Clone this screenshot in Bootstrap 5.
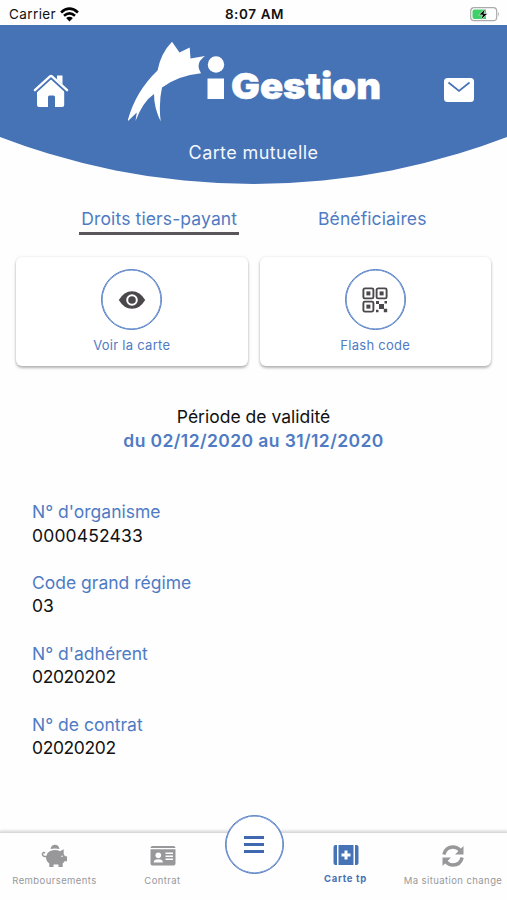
<!DOCTYPE html>
<html lang="fr">
<head>
<meta charset="utf-8">
<meta name="viewport" content="width=device-width, initial-scale=1">
<title>Carte mutuelle</title>
<link href="https://cdn.jsdelivr.net/npm/bootstrap@5.3.0/dist/css/bootstrap.min.css" rel="stylesheet">
<style>
  :root { --brand: #4672b6; --link: #4f7bc4; }
  body { font-family: Inter, "Liberation Sans", sans-serif; color: #111; background: #fefefe; }
  svg { display: block; }
  .screen { height: 900px; overflow: hidden; }
  .status { height: 25px; font-size: 13.5px; padding: 3px 7px 0 9px; line-height: 22px; }
  .status > div { flex: 1 1 0; }
  .carrier { letter-spacing: .4px; }
  .clock { letter-spacing: .6px; }
  .hero { height: 159px; background: var(--brand); clip-path: circle(707px at 50% -548px); }
  .hero-row { height: 112px; padding: 0 33px 0 33px; }
  .hero-title { font-size: 18px; line-height: 28px; letter-spacing: .4px; margin-top: 2px; color: #f4f7fc; }
  .tabs { padding: 22px 12px 0; }
  .tab-link { font-size: 17.5px; line-height: 25px; letter-spacing: .12px; color: var(--link); text-decoration: none; padding: 0 2px; border-bottom: 3px solid transparent; height: 29px; }
  .tab-link.active { border-color: #59565c; }
  .tab-first { padding-left: 53px; }
  .tiles { padding: 22px 16px 0; gap: 12px; }
  .tile { flex: 1 1 0; height: 109px; border: 0; border-radius: 6px; background: #fff; box-shadow: 0 2px 3px rgba(0,0,0,.28), 0 0 3px rgba(0,0,0,.1); padding-top: 12px; }
  .ring, .menu-btn { border: 1px solid var(--link); border-radius: 50%; box-shadow: inset 0 0 0 .6px var(--link); }
  .ring { width: 61px; height: 61px; }
  .tile-label { font-size: 13px; letter-spacing: .27px; line-height: 18px; margin-top: 6px; color: var(--link); }
  .validity { margin-top: 39px; font-size: 17.5px; line-height: 23.5px; }
  .validity b { font-weight: 600; letter-spacing: .4px; color: var(--link); }
  .fields { margin: 48px 0 0 32px; font-size: 17.5px; line-height: 23.5px; }
  .fields dt { font-weight: 400; color: var(--link); }
  .fields dd { margin: 0 0 23.9px; }
  .num-wide { letter-spacing: .15px; }
  .num-tight { letter-spacing: -.4px; }
  .dock { height: 67px; box-shadow: 0 -1px 3px 1px rgba(0,0,0,.18); background: #fefefe; }
  .dock-item { font-size: 9.5px; letter-spacing: .42px; line-height: 14px; color: #98989b; white-space: nowrap; text-decoration: none; padding-top: 11px; }
  .dock-item svg { margin-bottom: 6px; }
  .dock-item.active { padding-top: 10px; letter-spacing: .7px; color: var(--brand); font-weight: 700; }
  .dock-item.active svg { margin-bottom: 5px; }
  .menu-btn { width: 59px; height: 59px; background: #fff; margin-top: -18px; padding: 0; }
</style>
</head>
<body>
<div class="screen d-flex flex-column">
  <div class="status d-flex align-items-center">
    <div class="d-flex align-items-center gap-1">
      <span class="carrier">Carrier</span>
      <svg width="19" height="15" viewBox="0 0 18 14" fill="none" stroke="#000" stroke-width="2.5"><path d="M1 5.1Q9-2 17 5.1"/><path d="M3.800 8.200Q9 3.700 14.200 8.200"/><path d="M9 13.600L5.800 10.400Q9 7.700 12.200 10.400Z" fill="#000" stroke="none"/></svg>
    </div>
    <span class="clock fw-semibold">8:07 AM</span>
    <div class="d-flex justify-content-end">
      <svg width="30" height="15" viewBox="0 0 30 15"><rect x=".7" y=".7" width="26" height="13" rx="3.500" fill="#fff" stroke="#aaa" stroke-width="1.200"/><path d="M4.500 2.500H16v9.500H4.500q-2 0-2-2V4.500q0-2 2-2z" fill="#3fd168"/><path d="M28 4.800q1.800 2.400 0 4.800z" fill="#999"/><path d="M15.500 1.500L8.800 7.900h3.800L10.800 13l7-6.500h-4z" fill="#000" stroke="#fff" stroke-width=".6"/></svg>
    </div>
  </div>

  <header class="hero">
    <div class="hero-row d-flex align-items-center justify-content-between">
      <svg width="36" height="36" viewBox="0 0 36 36" fill="#fff" style="margin-top:20px"><path d="M18 5.700L31.200 17.400V32q0 2-2 2H22V24q0-1.500-1.500-1.500h-4Q15 22.500 15 24v10H6q-2 0-2-2V17.400z"/><path d="M1.800 18L16.800 4.200q1.200-1 2.400 0L34.200 18" fill="none" stroke="#4672b6" stroke-width="5"/><path d="M1.900 17.200L17 3.400q1-.8 2 0L34.100 17.200" fill="none" stroke="#fff" stroke-width="2.400" stroke-linecap="round"/><path d="M24 2.500h5.500v9L24 6.500z"/></svg>
      <svg width="258" height="84" viewBox="128 40 258 84" fill="#fff" style="margin-top:2px">
        <path d="M172 41.800L179.500 52.500L189.700 47.500L190.500 58.500L205 56Q194.500 63.500 201 73.200Q178 75.500 162 87.500Q158.500 103 160.700 121.500Q154 108 154 94Q143 101.500 135.500 121L136.800 112.500L127.500 121.500Q135 92 157.500 70.500Q161 53 172 41.800Z"/>
        <circle cx="216" cy="64.500" r="8.200"/><rect x="207.500" y="78.500" width="16.500" height="20.500"/>
        <text x="231" y="98.500" font-family="Inter, sans-serif" font-weight="900" font-size="36" textLength="150" lengthAdjust="spacingAndGlyphs" stroke="#fff" stroke-width=".5">Gestion</text>
      </svg>
      <svg width="30" height="24" viewBox="0 0 30 24" style="margin-top:17px"><rect width="30" height="24" rx="3.500" fill="#fff"/><path d="M4.500 4.500L15 13L25.500 4.500" fill="none" stroke="#4672b6" stroke-width="1.700"/></svg>
    </div>
    <div class="hero-title text-center"><span>Carte mutuelle</span></div>
  </header>

  <nav class="tabs d-flex">
    <div class="tab-first col-6 d-flex justify-content-center"><a class="tab-link active" href="#">Droits tiers-payant</a></div>
    <div class="col-6 d-flex justify-content-center pe-1"><a class="tab-link" href="#">Bénéficiaires</a></div>
  </nav>

  <div class="tiles d-flex">
    <div class="tile card align-items-center">
      <div class="ring d-flex align-items-center justify-content-center">
        <svg width="28" height="20" viewBox="0 0 28 20"><path d="M.8 10Q6 1.200 14 1.200T27.200 10Q22 18.800 14 18.800T.8 10z" fill="#4b484c"/><circle cx="14" cy="10" r="4.800" fill="#4b484c" stroke="#fff" stroke-width="2"/></svg>
      </div>
      <div class="tile-label"><span>Voir la carte</span></div>
    </div>
    <div class="tile card align-items-center">
      <div class="ring d-flex align-items-center justify-content-center">
        <svg width="26" height="26" viewBox="0 0 26 26" fill="#4b484c"><g fill="none" stroke="#4b484c" stroke-width="1.900"><rect x="1.400" y="1.400" width="10" height="10" rx="1.500"/><rect x="14.600" y="1.400" width="10" height="10" rx="1.500"/><rect x="1.400" y="14.600" width="10" height="10" rx="1.500"/></g><rect x="4.400" y="4.400" width="4" height="4"/><rect x="17.600" y="4.400" width="4" height="4"/><rect x="4.400" y="17.600" width="4" height="4"/><path d="M14 14h3v3h-3zM22.500 14h2.500v2.500h-2.500zM17 17h5v5h-5zM14 22.800h2.500v2.500H14zM21.800 21.800h3.400v3.400h-3.400z"/></svg>
      </div>
      <div class="tile-label"><span>Flash code</span></div>
    </div>
  </div>

  <div class="validity text-center"><span>Période de validité</span><br><b>du 02/12/2020 au 31/12/2020</b></div>

  <dl class="fields">
    <dt>N° d'organisme</dt><dd class="num-wide">0000452433</dd>
    <dt>Code grand régime</dt><dd>03</dd>
    <dt>N° d'adhérent</dt><dd class="num-tight">02020202</dd>
    <dt>N° de contrat</dt><dd class="num-tight">02020202</dd>
  </dl>

  <nav class="dock d-flex mt-auto flex-shrink-0">
    <a href="#" class="dock-item d-flex flex-column align-items-center" style="width:109px">
      <svg width="28" height="24" viewBox="0 0 28 24" fill="#98989b"><path d="M9.500 5Q10.500 .8 14 .8T18.500 5Q14 3.900 9.500 5z"/><path d="M6.500 9Q9.500 6 14 6q3 0 5 1.200L22.700 5.200v4.800l1.300 2.300h2v5h-2.500Q22.500 19 21.700 19.500V23h-4.200V20.500h-5V23H8.300V19.500Q5 17 5 13.500z"/><path d="M6.500 12.500Q1 13 1.500 9.600q1-2 2.500-.5" fill="none" stroke="#98989b" stroke-width="1.500"/><circle cx="21" cy="12.300" r=".8" fill="#fff"/></svg>
      <span>Remboursements</span>
    </a>
    <a href="#" class="dock-item d-flex flex-column align-items-center" style="width:107px">
      <svg width="26" height="24" viewBox="0 0 26 24"><path d="M2.500 2h21q2 0 2 2H.5q0-2 2-2zM.5 5.200h25V19.500q0 2-2 2h-21q-2 0-2-2z" fill="#98989b"/><g fill="#fff"><circle cx="8.300" cy="11.300" r="2.800"/><path d="M3.700 18.500q0-3.300 4.600-3.300t4.600 3.300zM15.500 8.500H23v1.600h-7.500zM15.500 11.500H23v1.600h-7.500zM15.500 14.500H23v1.600h-7.500z"/></g></svg>
      <span>Contrat</span>
    </a>
    <div class="d-flex justify-content-center" style="width:76px">
      <button class="menu-btn d-flex align-items-center justify-content-center" type="button" aria-label="Menu"><svg width="20" height="18" viewBox="0 0 20 18"><path d="M0 1.500h20M0 8.500h20M0 15.500h20" stroke="#4068b0" stroke-width="3"/></svg></button>
    </div>
    <a href="#" class="dock-item active d-flex flex-column align-items-center" style="width:107px">
      <svg width="26" height="24" viewBox="0 0 26 24" fill="#4672b6"><path d="M2.500 2H4v20H2.500Q.5 22 .5 20V4q0-2 2-2zM22 2h1.500q2 0 2 2v16q0 2-2 2H22zM5.500 2h15v20h-15z"/><path d="M11.500 7.500h3v3h3v3h-3v3h-3v-3h-3v-3h3z" fill="#fff"/></svg>
      <span>Carte tp</span>
    </a>
    <a href="#" class="dock-item d-flex flex-column align-items-center" style="width:108px">
      <svg width="24" height="24" viewBox="0 0 24 24"><g fill="none" stroke="#98989b" stroke-width="3.400"><path d="M2.800 10.500Q4.800 3 12 3q4 0 7.500 3.500"/><path d="M21.200 13.500Q19.200 21 12 21q-4 0-7.500-3.500"/></g><path d="M22.500 2v8.500H14zM1.500 22v-8.500H10z" fill="#98989b"/></svg>
      <span>Ma situation change</span>
    </a>
  </nav>
</div>
<script src="https://cdn.jsdelivr.net/npm/bootstrap@5.3.0/dist/js/bootstrap.bundle.min.js"></script>
</body>
</html>
